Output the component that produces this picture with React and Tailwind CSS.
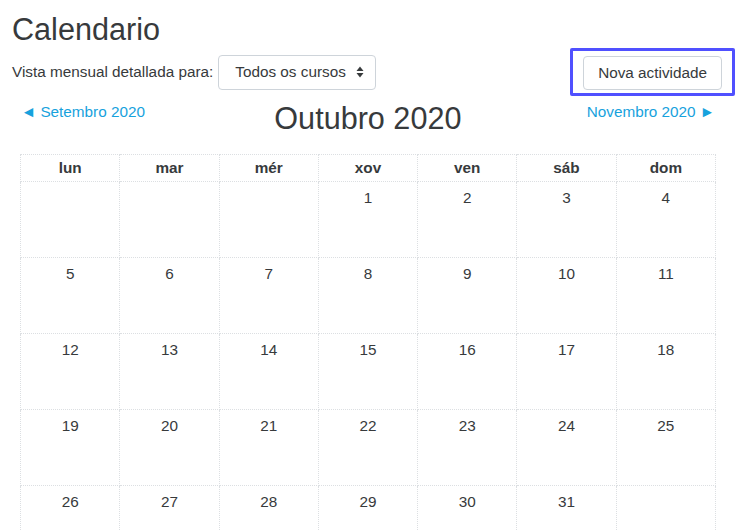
import React from "react";

const days = ["lun", "mar", "mér", "xov", "ven", "sáb", "dom"];

const weeks = [
  [null, null, null, 1, 2, 3, 4],
  [5, 6, 7, 8, 9, 10, 11],
  [12, 13, 14, 15, 16, 17, 18],
  [19, 20, 21, 22, 23, 24, 25],
  [26, 27, 28, 29, 30, 31, null],
];

const SortIcon = () => (
  <svg width="8" height="12" viewBox="0 0 8 12" className="ml-[10px]">
    <path d="M4 0.5 L7.5 5 H0.5 Z" fill="#373a3c" />
    <path d="M4 11.5 L7.5 7 H0.5 Z" fill="#373a3c" />
  </svg>
);

const App = () => {
  return (
    <div
      className="min-h-[531px] bg-white text-[#373a3c] overflow-hidden"
      style={{ fontFamily: '"Liberation Sans", Arial, sans-serif' }}
    >
      {/* Title */}
      <h2 className="pl-[12px] pt-[11px] text-[30.6px] leading-[36px] font-normal">
        Calendario
      </h2>

      {/* Filter row */}
      <div className="flex items-center justify-between pl-[12px] pr-[5px] mt-[1px]">
        <div className="flex items-center">
          <label className="text-[15.3px] leading-[22px]">
            Vista mensual detallada para:
          </label>
          <div className="ml-[5px] flex items-center h-[35px] w-[158px] pl-[16px] border border-[#ced4da] rounded-[4px] text-[15.3px]">
            <span>Todos os cursos</span>
            <SortIcon />
          </div>
        </div>
        <div className="border-[3px] border-[#5050ff] rounded-[2px] px-[10px] pt-[5px] pb-[3px]">
          <button className="h-[34px] px-[14px] border border-[#ced4da] rounded-[4px] bg-white text-[15.3px] text-[#373a3c]">
            Nova actividade
          </button>
        </div>
      </div>

      {/* Month navigation */}
      <div className="ml-[20px] w-[696px] flex items-start justify-between mt-[4px]">
        <a className="mt-[1px] ml-[1px] text-[15.3px] leading-[22px] text-[#17a2dd] cursor-pointer">
          ◄ Setembro 2020
        </a>
        <h2 className="ml-[4px] text-[30.6px] leading-[36px] font-normal">Outubro 2020</h2>
        <a className="mt-[1px] mr-[1px] text-[15.3px] leading-[22px] text-[#17a2dd] cursor-pointer">
          Novembro 2020 ►
        </a>
      </div>

      {/* Calendar */}
      <table className="ml-[20px] mt-[18px] w-[696px] table-fixed border-collapse text-[15.3px]">
        <thead>
          <tr>
            {days.map((d) => (
              <th
                key={d}
                className="h-[27px] p-0 font-bold border border-dotted border-[#dcdfe2] leading-[22px]"
              >
                {d}
              </th>
            ))}
          </tr>
        </thead>
        <tbody>
          {weeks.map((week, i) => (
            <tr key={i}>
              {week.map((n, j) => (
                <td
                  key={j}
                  className="h-[76px] p-0 pt-[5px] align-top text-center border border-dotted border-[#dcdfe2] leading-[22px]"
                >
                  {n}
                </td>
              ))}
            </tr>
          ))}
        </tbody>
      </table>
    </div>
  );
};

export default App;
